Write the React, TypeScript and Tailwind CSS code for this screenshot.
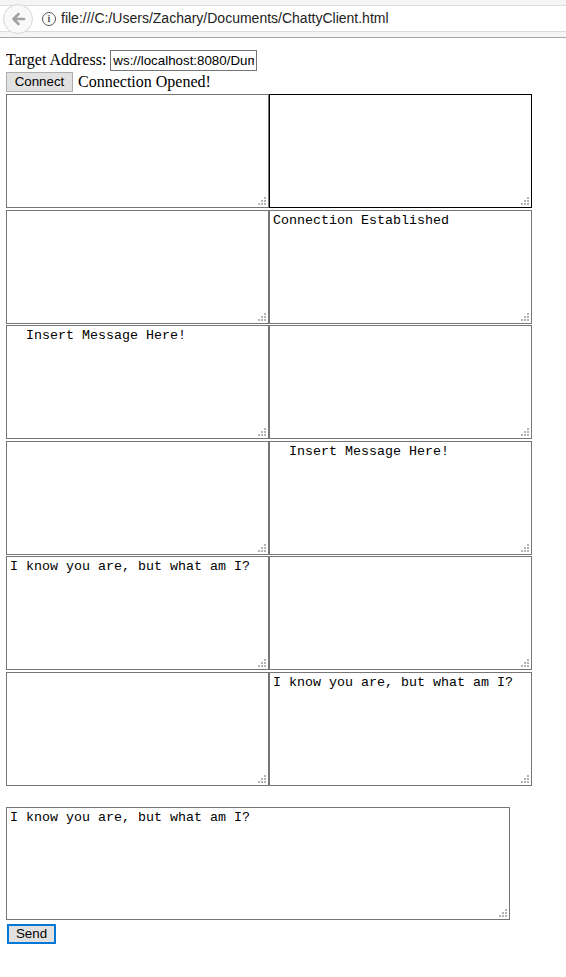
import { useState } from 'react'

const mono = { fontFamily: '"Liberation Mono", "Courier New", monospace' }

// little dotted resize grip, the kind old Chrome drew in the corner of a textarea
function Grip() {
  const dots = [
    [6, 0],
    [3, 3],
    [6, 3],
    [0, 6],
    [3, 6],
    [6, 6],
  ]
  return (
    <div className="absolute right-[3px] bottom-[3px] w-[8px] h-[8px] pointer-events-none">
      {dots.map(([x, y], i) => (
        <span
          key={i}
          className="absolute w-[2px] h-[2px] bg-[#b4b4b4]"
          style={{ left: x, top: y }}
        />
      ))}
    </div>
  )
}

function Box({
  value,
  focused,
  className,
}: {
  value: string
  focused?: boolean
  className: string
}) {
  return (
    <div className={`relative ${className}`}>
      <textarea
        readOnly
        value={value}
        className={`block w-full h-full resize-none border bg-white px-[3px] py-[2px] text-[13.33px] leading-[15px] text-black outline-none ${
          focused ? 'border-black' : 'border-[#767676]'
        }`}
        style={mono}
      />
      <Grip />
    </div>
  )
}

export default function App() {
  const [target] = useState('ws://localhost:8080/DumbChat')

  // left / right column for each of the six rows
  const rows: [string, string][] = [
    ['', ''],
    ['', 'Connection Established'],
    ['  Insert Message Here!', ''],
    ['', '  Insert Message Here!'],
    ['I know you are, but what am I?', ''],
    ['', 'I know you are, but what am I?'],
  ]

  return (
    <div className="w-[566px] h-[977px] bg-white overflow-hidden">
      {/* browser toolbar */}
      <div className="h-[38px] bg-[#f5f5f5] border-b border-[#a8a8a8] relative">
        <div className="absolute left-0 right-0 top-[5px] h-[27px] bg-white border-y border-[#dcdcdc] flex items-center">
          <div className="w-[40px]" />
          <div className="w-[14px] h-[14px] rounded-full border border-[#555] flex items-center justify-center text-[10px] leading-none text-[#555] font-bold ml-[2px]" style={{ fontFamily: '"Liberation Serif", serif' }}>
            i
          </div>
          <span
            className="ml-[5px] text-[14px] text-[#222]"
            style={{ fontFamily: '"Liberation Sans", Arial, sans-serif' }}
          >
            file:///C:/Users/Zachary/Documents/ChattyClient.html
          </span>
        </div>
        <div className="absolute left-[3px] top-[4px] w-[30px] h-[30px] rounded-full bg-[#f9f9f9] border border-[#d6d6d6] flex items-center justify-center">
          <svg width="16" height="16" viewBox="0 0 16 16">
            <path d="M14 8H4M8.5 3L3.5 8l5 5" stroke="#a3a3a3" strokeWidth="2.6" fill="none" strokeLinecap="round" strokeLinejoin="round" />
          </svg>
        </div>
      </div>

      <div className="pl-[6px] pt-[11px] text-black" style={{ fontFamily: '"Liberation Serif", "Times New Roman", serif' }}>
        <div className="flex items-center h-[22px] text-[16px]">
          <span>Target Address:</span>
          <input
            readOnly
            value={target}
            className="ml-[4px] w-[147px] h-[21px] border border-[#767676] px-[2px] text-[13.33px] text-black outline-none"
            style={{ fontFamily: '"Liberation Sans", Arial, sans-serif' }}
          />
        </div>
        <div className="flex items-center h-[22px] text-[16px]">
          <button
            className="w-[67px] h-[20px] bg-[#e1e1e1] border border-[#adadad] text-[13.33px] leading-none"
            style={{ fontFamily: '"Liberation Sans", Arial, sans-serif' }}
          >
            Connect
          </button>
          <span className="ml-[5px]">Connection Opened!</span>
        </div>

        <div className="mt-[1px] grid grid-cols-[263px_263px] gap-y-[1.5px]">
          {rows.map(([l, r], i) => (
            <div key={i} className="contents">
              <Box value={l} className="h-[114px]" />
              <Box value={r} focused={i === 0} className="h-[114px]" />
            </div>
          ))}
        </div>

        <Box value="I know you are, but what am I?" className="w-[504px] h-[113px] mt-[21px]" />

        <button
          className="mt-[4px] ml-[1px] w-[49px] h-[20px] bg-[#e1e1e1] border-2 border-[#0078d7] text-[13.33px] leading-none"
          style={{ fontFamily: '"Liberation Sans", Arial, sans-serif' }}
        >
          Send
        </button>
      </div>
    </div>
  )
}
